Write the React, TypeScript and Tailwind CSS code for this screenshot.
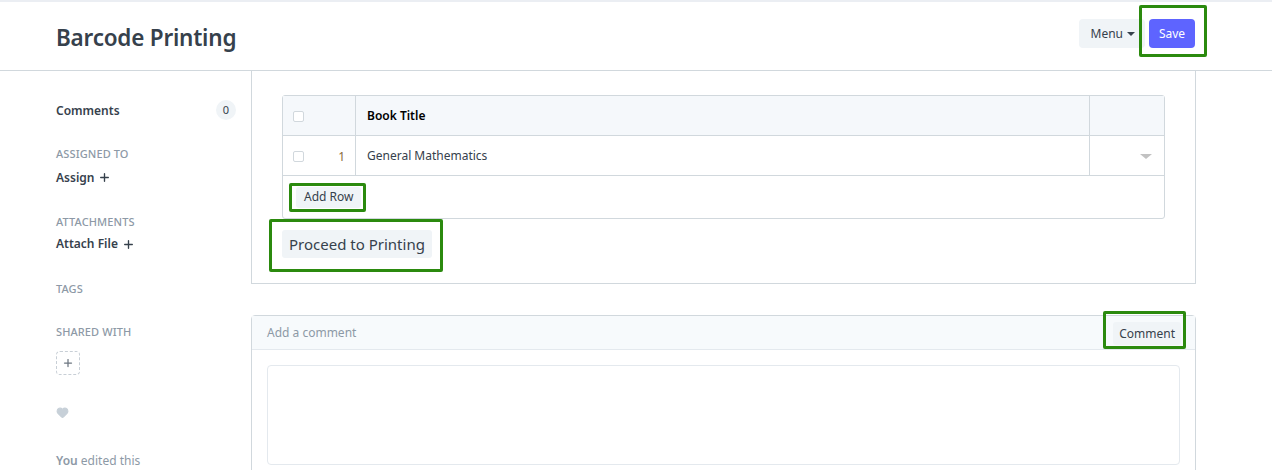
import { Plus, Heart } from "lucide-react";

function Highlight({ className }: { className: string }) {
  return (
    <span
      className={`pointer-events-none absolute rounded-[2px] border-[3px] border-[#2b8a0e] ${className}`}
    />
  );
}

function SideLabel({ children }: { children: React.ReactNode }) {
  return (
    <div className="text-[11px] font-medium uppercase tracking-[0.01em] text-[#8d99a6]">
      {children}
    </div>
  );
}

export default function App() {
  return (
    <div
      className="h-[470px] overflow-hidden bg-white text-[#36414c]"
      style={{ fontFamily: "'Noto Sans', 'Open Sans', sans-serif" }}
    >
      <div className="h-[2px] bg-[#ebeef3]" />

      {/* Header */}
      <div className="flex h-[69px] items-center justify-between border-b border-[#d1d8dd] pl-[56px] pr-[77px]">
        <h1 className="mt-[3px] text-[22.5px] font-semibold tracking-[-0.01em] text-[#36414c]">
          Barcode Printing
        </h1>
        <div className="-mt-[5px] flex items-center gap-1">
          <button className="flex h-[29px] items-center gap-1 rounded-[4px] bg-[#f0f4f7] pl-[12px] pr-[10px] text-[12px] text-[#36414c]">
            Menu
            <span className="mt-[1px] h-0 w-0 border-x-[4px] border-t-[4px] border-x-transparent border-t-[#36414c]" />
          </button>
          <div className="relative">
            <button className="h-[29px] w-[46px] rounded-[4px] bg-[#5e64ff] text-[12px] text-white">
              Save
            </button>
            <Highlight className="-left-[10px] -top-[14px] h-[52px] w-[68px]" />
          </div>
        </div>
      </div>

      <div className="flex pl-[56px]">
        {/* Sidebar */}
        <div className="w-[195px] shrink-0 pr-[15px]">
          <div className="mt-[31px] flex items-center justify-between">
            <span className="text-[12px] font-semibold text-[#36414c]">Comments</span>
            <span className="-mt-[2px] flex h-[20px] w-[20px] items-center justify-center rounded-full bg-[#f0f4f7] text-[11px] text-[#36414c]">
              0
            </span>
          </div>

          <div className="mt-[26px]">
            <SideLabel>Assigned To</SideLabel>
            <div className="mt-[6px] flex items-center gap-1 text-[12px] font-semibold">
              Assign <Plus className="h-[13px] w-[13px]" strokeWidth={2.5} />
            </div>
          </div>

          <div className="mt-[27px]">
            <SideLabel>Attachments</SideLabel>
            <div className="mt-[5px] flex items-center gap-1 text-[12px] font-semibold">
              Attach File <Plus className="h-[13px] w-[13px]" strokeWidth={2.5} />
            </div>
          </div>

          <div className="mt-[28px]">
            <SideLabel>Tags</SideLabel>
          </div>

          <div className="mt-[26px]">
            <SideLabel>Shared With</SideLabel>
            <div className="mt-[11px] flex h-[24px] w-[24px] items-center justify-center rounded-[4px] border border-dashed border-[#c8cfd6]">
              <Plus className="h-[12px] w-[12px] text-[#6c7680]" strokeWidth={2.5} />
            </div>
          </div>

          <div className="mt-[31px]">
            <Heart className="h-[13px] w-[13px] fill-[#c7d0d8] text-[#c7d0d8]" />
          </div>

          <div className="mt-[33px] text-[12px] text-[#8d99a6]">
            <span className="font-semibold">You</span> edited this
          </div>
        </div>

        {/* Main */}
        <div className="w-[945px] shrink-0">
          <div className="border-x border-b border-[#d1d8dd] px-[30px] pb-[25px] pt-[24px]">
            <div className="rounded-[3px] border border-[#d1d8dd] text-[12px]">
              <div className="flex h-[40px] border-b border-[#d1d8dd] bg-[#f5f8fb]">
                <div className="flex w-[73px] items-center border-r border-[#d1d8dd] pl-[10px] pt-[2px]">
                  <span className="h-[11px] w-[11px] rounded-[2px] border border-[#d1d8dd] bg-white" />
                </div>
                <div className="flex flex-1 items-center border-r border-[#d1d8dd] pl-[11px] font-semibold text-[#000]">
                  Book Title
                </div>
                <div className="w-[74px]" />
              </div>
              <div className="flex h-[40px] border-b border-[#d1d8dd]">
                <div className="flex w-[73px] items-center justify-between border-r border-[#d1d8dd] pl-[10px] pr-[10px] pt-[2px]">
                  <span className="h-[11px] w-[11px] rounded-[2px] border border-[#d1d8dd] bg-white" />
                  <span className="text-[#8a6a3b]">1</span>
                </div>
                <div className="flex flex-1 items-center border-r border-[#d1d8dd] pl-[11px] text-[#36414c]">
                  General Mathematics
                </div>
                <div className="flex w-[74px] items-center justify-end pr-[12px] pt-[2px]">
                  <span className="h-0 w-0 border-x-[6px] border-t-[5px] border-x-transparent border-t-[#c2c2c2]" />
                </div>
              </div>
              <div className="flex h-[42px] items-center pl-[13px]">
                <div className="relative">
                  <button className="h-[21px] rounded-[3px] bg-[#f0f4f7] px-[8px] text-[12px] text-[#36414c]">
                    Add Row
                  </button>
                  <Highlight className="-left-[7px] -top-[4px] h-[29px] w-[77px]" />
                </div>
              </div>
            </div>
            <div className="relative mt-[11px] inline-block">
              <button className="h-[28px] rounded-[3px] bg-[#f0f4f7] px-[7px] text-[15px] text-[#36414c]">
                Proceed to Printing
              </button>
              <Highlight className="-left-[13px] -top-[11px] h-[53px] w-[174px]" />
            </div>
          </div>

          {/* Comment box */}
          <div className="mt-[31px] rounded-t-[4px] border border-[#d1d8dd]">
            <div className="flex h-[34px] items-center justify-between border-b border-[#e4e9ee] bg-[#f7fafc] pl-[15px] pr-[14px]">
              <span className="text-[12px] text-[#8d99a6]">Add a comment</span>
              <div className="relative">
                <button className="h-[23px] rounded-[3px] bg-[#f0f4f7] px-[6px] text-[12px] text-[#36414c]">
                  Comment
                </button>
                <Highlight className="-left-[10px] -top-[9px] h-[38px] w-[83px]" />
              </div>
            </div>
            <div className="px-[15px] pb-[10px] pt-[15px]">
              <div className="h-[100px] rounded-[4px] border border-[#e4e9ee]" />
            </div>
          </div>
        </div>
      </div>
    </div>
  );
}
